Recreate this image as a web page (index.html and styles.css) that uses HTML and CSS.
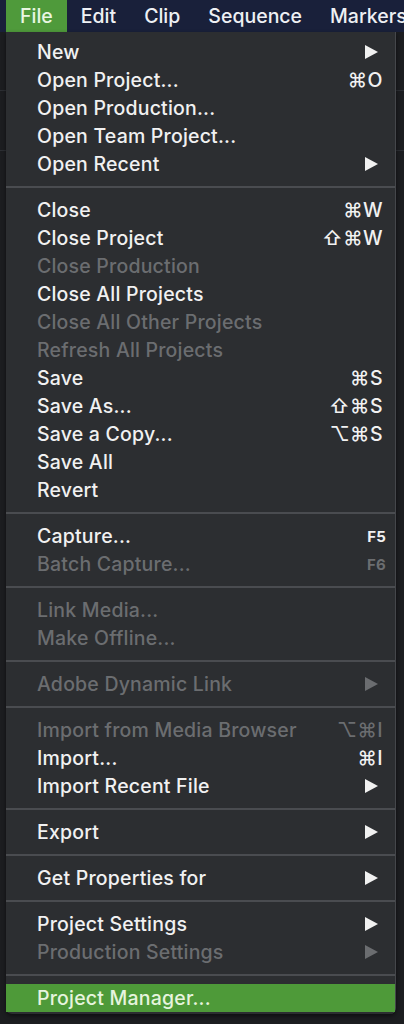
FILE: index.html
```html
<!DOCTYPE html>
<html>
<head>
<meta charset="utf-8">
<link rel="stylesheet" href="styles.css">
</head>
<body>
<nav class="menubar">
  <span class="mb-item active">File</span>
  <span class="mb-item">Edit</span>
  <span class="mb-item">Clip</span>
  <span class="mb-item">Sequence</span>
  <span class="mb-item">Markers</span>
</nav>
<div class="stage">
  <div class="backdrop">
    <div class="bd-line l1"></div>
    <div class="bd-line l2"></div>
  </div>
  <div class="menu">
    <div class="item"><span>New</span><span class="arrow"></span></div>
    <div class="item"><span>Open Project...</span><span class="key">⌘O</span></div>
    <div class="item"><span>Open Production...</span></div>
    <div class="item"><span>Open Team Project...</span></div>
    <div class="item"><span>Open Recent</span><span class="arrow"></span></div>
    <div class="sep"></div>
    <div class="item"><span>Close</span><span class="key">⌘W</span></div>
    <div class="item"><span>Close Project</span><span class="key">⇧⌘W</span></div>
    <div class="item dis"><span>Close Production</span></div>
    <div class="item"><span>Close All Projects</span></div>
    <div class="item dis"><span>Close All Other Projects</span></div>
    <div class="item dis"><span>Refresh All Projects</span></div>
    <div class="item"><span>Save</span><span class="key">⌘S</span></div>
    <div class="item"><span>Save As...</span><span class="key">⇧⌘S</span></div>
    <div class="item"><span>Save a Copy...</span><span class="key">⌥⌘S</span></div>
    <div class="item"><span>Save All</span></div>
    <div class="item"><span>Revert</span></div>
    <div class="sep"></div>
    <div class="item"><span>Capture...</span><span class="fkey">F5</span></div>
    <div class="item dis"><span>Batch Capture...</span><span class="fkey">F6</span></div>
    <div class="sep"></div>
    <div class="item dis"><span>Link Media...</span></div>
    <div class="item dis"><span>Make Offline...</span></div>
    <div class="sep"></div>
    <div class="item dis"><span>Adobe Dynamic Link</span><span class="arrow"></span></div>
    <div class="sep"></div>
    <div class="item dis"><span>Import from Media Browser</span><span class="key">⌥⌘I</span></div>
    <div class="item"><span>Import...</span><span class="key">⌘I</span></div>
    <div class="item"><span>Import Recent File</span><span class="arrow"></span></div>
    <div class="sep"></div>
    <div class="item"><span>Export</span><span class="arrow"></span></div>
    <div class="sep"></div>
    <div class="item"><span>Get Properties for</span><span class="arrow"></span></div>
    <div class="sep"></div>
    <div class="item"><span>Project Settings</span><span class="arrow"></span></div>
    <div class="item dis"><span>Production Settings</span><span class="arrow"></span></div>
    <div class="sep"></div>
    <div class="item hl"><span>Project Manager...</span></div>
  </div>
</div>
</body>
</html>
```

FILE: styles.css
```css
html, body {
  margin: 0;
  padding: 0;
}
body {
  background: #1c1d20;
  font-family: Inter, "Noto Sans", "Liberation Sans", sans-serif;
  width: 404px;
  height: 1024px;
  overflow: hidden;
}
.menubar {
  height: 32px;
  background: #19203a;
  display: flex;
  align-items: stretch;
  padding-left: 6px;
  white-space: nowrap;
  overflow: hidden;
}
.mb-item {
  display: flex;
  align-items: center;
  padding: 0 14px;
  font-size: 19.5px;
  font-weight: 500;
  color: #eef0f4;
  letter-spacing: 0;
}
.mb-item.active {
  background: #4f9a3b;
  color: #e9f6e2;
}
.stage {
  position: relative;
  height: 992px;
}
.backdrop {
  position: absolute;
  inset: 0;
  overflow: hidden;
}
.bd-line {
  position: absolute;
  left: 0;
  right: 0;
  height: 1px;
  background: #2c2e33;
}
.bd-line.l1 { top: 58px; }
.bd-line.l2 { top: 118px; }
.menu {
  position: relative;
  margin-left: 6px;
  width: 390px;
  background: #2c2e31;
  border-right: 1px solid #45474b;
  padding: 6px 0 2px;
  box-sizing: border-box;
  border-radius: 0 0 6px 6px;
  box-shadow: 0 2px 4px rgba(0,0,0,0.5);
}
.item {
  height: 28px;
  display: flex;
  align-items: center;
  justify-content: space-between;
  padding: 0 12px 0 31px;
  font-size: 19.5px;
  font-weight: 500;
  letter-spacing: 0.2px;
  color: #f1f1f1;
  white-space: nowrap;
}
.item.dis {
  color: #6b6d70;
}
.item.hl {
  background: #4e9a39;
  color: #e6f4de;
}
.key {
  letter-spacing: 0.5px;
}
.fkey {
  font-size: 15px;
  font-weight: 700;
  margin-right: -3px;
}
.arrow {
  width: 0;
  height: 0;
  border-top: 7px solid transparent;
  border-bottom: 7px solid transparent;
  border-left: 13px solid #f1f1f1;
  margin-right: 5px;
}
.item.dis .arrow {
  border-left-color: #6b6d70;
}
.sep {
  height: 18px;
  display: flex;
  align-items: center;
}
.sep::before {
  content: "";
  display: block;
  width: 100%;
  height: 2px;
  background: #4a4c50;
}
```
